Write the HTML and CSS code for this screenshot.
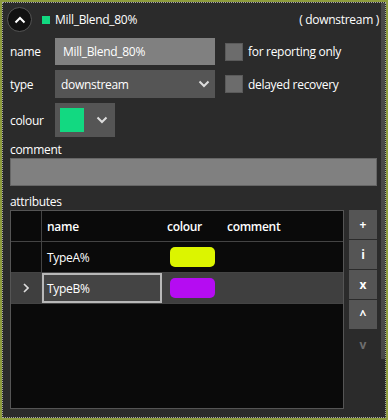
FILE: index.html
```html
<!DOCTYPE html>
<html lang="en">
<head>
<meta charset="UTF-8">
<meta name="viewport" content="width=device-width, initial-scale=1.0">
<title>Stream editor</title>
<link rel="stylesheet" href="styles.css">
</head>
<body>
<div class="frame">
    <div class="panel">
        <div class="scroll-thumb"></div>

        <div class="head">
            <button class="collapse">
                <svg width="12" height="8" viewBox="0 0 12 8"><path d="M1.5 6.5 L6 2 L10.5 6.5" fill="none" stroke="#fff" stroke-width="2"/></svg>
            </button>
            <span class="head-dot"></span>
            <span class="head-title">Mill_Blend_80%</span>
            <span class="head-type">( downstream )</span>
        </div>

        <div class="fields">
            <label class="field-label">name</label>
            <div class="text-input">Mill_Blend_80%</div>
            <div class="check"><span class="check-box"></span>for reporting only</div>

            <label class="field-label">type</label>
            <div class="select">
                <span>downstream</span>
                <svg width="12" height="8" viewBox="0 0 12 8"><path d="M1.5 1.5 L6 6 L10.5 1.5" fill="none" stroke="#ddd" stroke-width="2"/></svg>
            </div>
            <div class="check"><span class="check-box"></span>delayed recovery</div>

            <label class="field-label">colour</label>
            <div class="colour-pick">
                <span class="swatch-big"></span>
                <svg width="12" height="8" viewBox="0 0 12 8"><path d="M1.5 1.5 L6 6 L10.5 1.5" fill="none" stroke="#ddd" stroke-width="2"/></svg>
            </div>
        </div>

        <div class="block-label">comment</div>
        <div class="comment-input"></div>

        <div class="block-label">attributes</div>
        <div class="attributes">
            <div class="grid">
                <div class="grid-row grid-head">
                    <div class="cell row-head"></div>
                    <div class="cell">name</div>
                    <div class="cell">colour</div>
                    <div class="cell">comment</div>
                </div>
                <div class="grid-row">
                    <div class="cell row-head"></div>
                    <div class="cell">TypeA%</div>
                    <div class="cell"><span class="swatch" style="background:#dcf500"></span></div>
                    <div class="cell"></div>
                </div>
                <div class="grid-row selected">
                    <div class="cell row-head">
                        <svg width="6" height="10" viewBox="0 0 6 10"><path d="M1 1 L5 5 L1 9" fill="none" stroke="#ddd" stroke-width="1.6"/></svg>
                    </div>
                    <div class="cell editing">TypeB%</div>
                    <div class="cell"><span class="swatch" style="background:#b50cf2"></span></div>
                    <div class="cell"></div>
                </div>
            </div>
            <div class="tools">
                <button class="tool">+</button>
                <button class="tool">i</button>
                <button class="tool">x</button>
                <button class="tool">^</button>
                <button class="tool off">v</button>
            </div>
        </div>
    </div>
</div>
</body>
</html>
```

FILE: styles.css
```css
body {
    margin: 0;
    padding: 0;
    background-color: #2b2b2b;
    font-family: "Open Sans", "Noto Sans", sans-serif;
    font-size: 12px;
    letter-spacing: -0.3px;
    color: #fff;
}

.frame {
    width: 388px;
    height: 420px;
    box-sizing: border-box;
    border: 2px solid #8e9c3e;
}

.panel {
    position: relative;
    height: 100%;
    box-sizing: border-box;
    border: 1px dotted #a8a8a8;
    background-color: #2b2b2b;
    padding-left: 7px;
}

.scroll-thumb {
    position: absolute;
    right: 0;
    top: 0;
    width: 4px;
    height: 356px;
    background-color: #4a4a4a;
}

/* Header */
.head {
    display: flex;
    align-items: center;
    height: 25px;
    margin-top: 4px;
}

.collapse {
    width: 25px;
    height: 25px;
    margin-left: -3px;
    padding: 0;
    border: 1px solid #555;
    border-radius: 50%;
    background-color: #111;
    display: flex;
    align-items: center;
    justify-content: center;
}

.head-dot {
    width: 8px;
    height: 8px;
    margin-left: 10px;
    background-color: #12d981;
}

.head-title {
    margin-left: 5px;
}

.head-type {
    margin-left: auto;
    margin-right: 6px;
}

/* Form */
.fields {
    display: grid;
    grid-template-columns: 45px 160px auto;
    grid-template-rows: 27px 28px 34px;
    row-gap: 5px;
    align-items: center;
    margin-top: 6px;
}

.field-label {
    color: #fff;
}

.text-input {
    height: 27px;
    line-height: 27px;
    padding-left: 8px;
    background-color: #808080;
}

.select {
    height: 28px;
    display: flex;
    align-items: center;
    justify-content: space-between;
    padding: 0 5px 0 6px;
    background-color: #555;
}

.check {
    display: flex;
    align-items: center;
    margin-left: 10px;
}

.check-box {
    width: 16px;
    height: 16px;
    margin-right: 5px;
    border: 1px solid #5a5a5a;
    background-color: #6c6c6c;
}

.colour-pick {
    width: 60px;
    height: 34px;
    box-sizing: border-box;
    display: flex;
    align-items: center;
    padding-left: 5px;
    background-color: #555;
}

.swatch-big {
    width: 24px;
    height: 24px;
    background-color: #12d981;
}

.colour-pick svg {
    margin-left: 12px;
}

.block-label {
    height: 16px;
    line-height: 16px;
    margin-top: 5px;
}

.comment-input {
    width: 367px;
    height: 28px;
    box-sizing: border-box;
    border: 1px solid #666;
    background-color: #808080;
}

.comment-input + .block-label {
    margin-top: 8px;
}

/* Attributes table */
.attributes {
    display: flex;
    gap: 5px;
}

.grid {
    width: 334px;
    height: 199px;
    box-sizing: border-box;
    border: 1px solid #555;
    background-color: #0a0a0a;
}

.grid-row {
    display: grid;
    grid-template-columns: 31px 120px 60px 1fr;
    height: 30px;
    border-bottom: 1px solid #444;
}

.grid-head .cell {
    font-weight: 600;
}

.cell {
    display: flex;
    align-items: center;
    padding-left: 5px;
    box-sizing: border-box;
}

.row-head {
    border-right: 1px solid #444;
    justify-content: center;
    padding-left: 0;
}

.selected {
    background-color: #3f3f3f;
}

.editing {
    border: 2px solid #b8b8b8;
    background-color: #444;
    padding-left: 3px;
}

.swatch {
    width: 45px;
    height: 20px;
    margin-left: 3px;
    border-radius: 5px;
}

.tools {
    display: flex;
    flex-direction: column;
    gap: 1px;
}

.tool {
    width: 28px;
    height: 29px;
    padding: 0;
    border: none;
    background-color: #555;
    color: #fff;
    font-family: inherit;
    font-size: 12px;
    font-weight: bold;
}

.tool.off {
    background-color: transparent;
    color: #6e6e6e;
}
```
